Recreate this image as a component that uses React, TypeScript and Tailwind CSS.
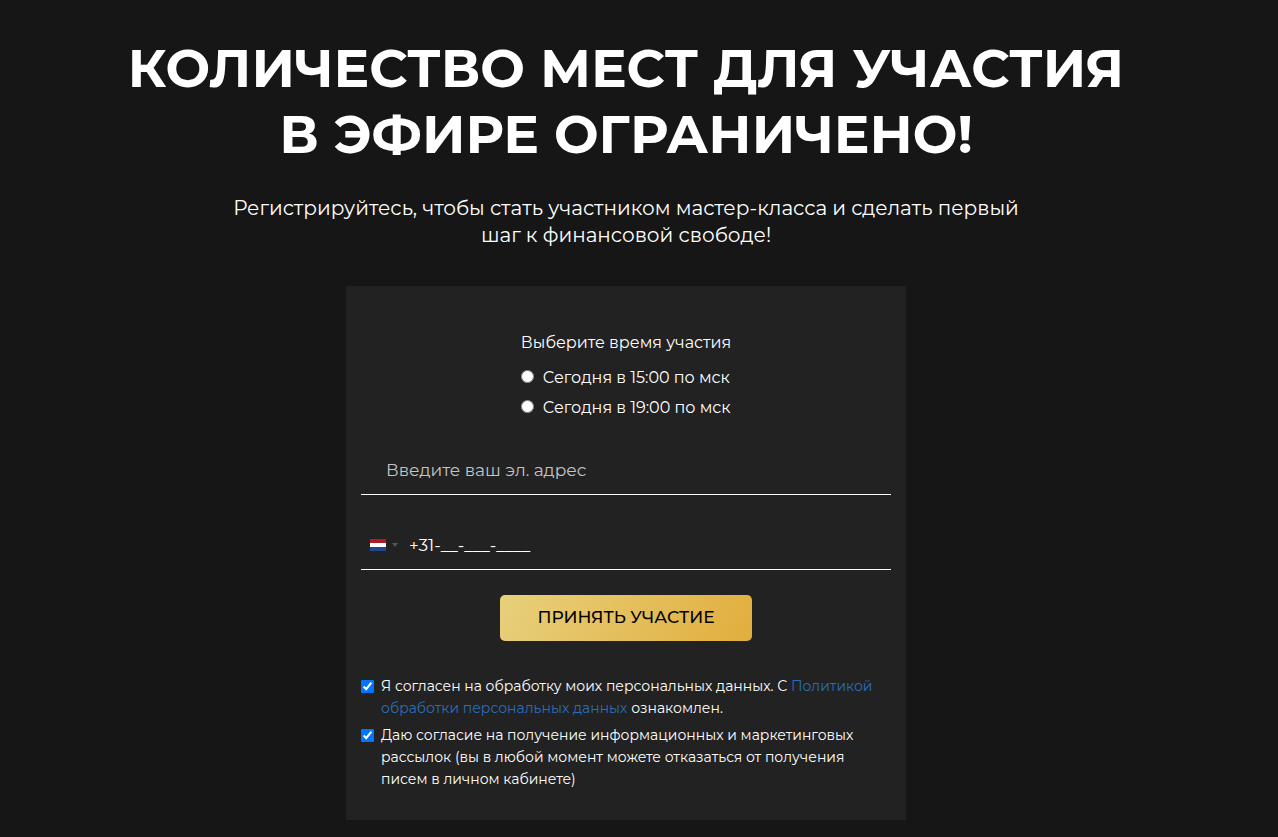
import { useState } from "react";

const times = [
  { value: "15", label: "Сегодня в 15:00 по мск" },
  { value: "19", label: "Сегодня в 19:00 по мск" },
];

function FlagNL() {
  return (
    <svg width="16" height="12" viewBox="0 0 16 12" aria-hidden="true">
      <rect width="16" height="4" fill="#ae1c28" />
      <rect y="4" width="16" height="4" fill="#ffffff" />
      <rect y="8" width="16" height="4" fill="#21468b" />
    </svg>
  );
}

export default function App() {
  const [time, setTime] = useState("");
  const [email, setEmail] = useState("");
  const [phone, setPhone] = useState("+31-__-___-____");
  const [agree, setAgree] = useState(true);
  const [mailing, setMailing] = useState(true);

  return (
    <main className="flex min-h-screen flex-col items-center bg-[#161616] pt-[35px] pr-[26px] pb-4 font-['Montserrat','Inter',sans-serif] text-white">
      <h1 className="text-center text-[53px] leading-[66px] font-bold uppercase">
        Количество мест для участия
        <br />
        в эфире ограничено!
      </h1>
      <p className="mt-7 text-center text-xl leading-[27px]">
        Регистрируйтесь, чтобы стать участником мастер-класса и сделать первый
        <br />
        шаг к финансовой свободе!
      </p>

      <form
        className="mt-[37px] w-full max-w-[560px] bg-[#222222] px-[15px] pt-[42px] pb-[30px]"
        onSubmit={(e) => e.preventDefault()}
      >
        <fieldset className="mx-auto w-fit text-base leading-[30px]">
          <legend className="mb-[5px]">Выберите время участия</legend>
          {times.map((t) => (
            <label key={t.value} className="flex items-start gap-[9px]">
              <input
                type="radio"
                name="time"
                value={t.value}
                checked={time === t.value}
                onChange={() => setTime(t.value)}
                className="mt-[7px] size-[13px]"
              />
              {t.label}
            </label>
          ))}
        </fieldset>

        <input
          type="email"
          aria-label="Эл. адрес"
          placeholder="Введите ваш эл. адрес"
          value={email}
          onChange={(e) => setEmail(e.target.value)}
          className="mt-[23px] block h-[49px] w-full border-b border-white px-[25px] text-[17px] outline-none placeholder:text-[#c4c4c4]"
        />

        <div className="mt-[26px] flex h-[49px] items-center border-b border-white">
          <button type="button" aria-label="Страна: Нидерланды" className="flex h-full items-center gap-[6px] px-[9px]">
            <FlagNL />
            <svg width="6" height="4" viewBox="0 0 6 4" aria-hidden="true">
              <path d="M0 0h6L3 4z" fill="#555555" />
            </svg>
          </button>
          <input
            type="tel"
            aria-label="Телефон"
            value={phone}
            onChange={(e) => setPhone(e.target.value)}
            className="h-full min-w-0 flex-1 pl-[2px] text-[17px] outline-none"
          />
        </div>

        <button
          type="submit"
          className="mx-auto mt-[25px] block h-[46px] w-[252px] rounded-[5px] bg-linear-[120deg,#e8d07c,#e1ae3d] text-[17px] font-medium text-black uppercase"
        >
          Принять участие
        </button>

        <div className="mt-[34px] space-y-[5px] text-sm leading-[22px]">
          <div className="flex items-start gap-[7px]">
            <input
              id="agree"
              type="checkbox"
              checked={agree}
              onChange={(e) => setAgree(e.target.checked)}
              className="mt-[5px] size-[13px] shrink-0"
            />
            <label htmlFor="agree">
              Я согласен на обработку моих персональных данных. С{" "}
              <a href="#policy" className="text-[#2a6db8]">
                Политикой
                <br />
                обработки персональных данных
              </a>{" "}
              ознакомлен.
            </label>
          </div>
          <div className="flex items-start gap-[7px]">
            <input
              id="mailing"
              type="checkbox"
              checked={mailing}
              onChange={(e) => setMailing(e.target.checked)}
              className="mt-[5px] size-[13px] shrink-0"
            />
            <label htmlFor="mailing">
              Даю согласие на получение информационных и маркетинговых
              <br />
              рассылок (вы в любой момент можете отказаться от получения
              <br />
              писем в личном кабинете)
            </label>
          </div>
        </div>
      </form>
    </main>
  );
}
